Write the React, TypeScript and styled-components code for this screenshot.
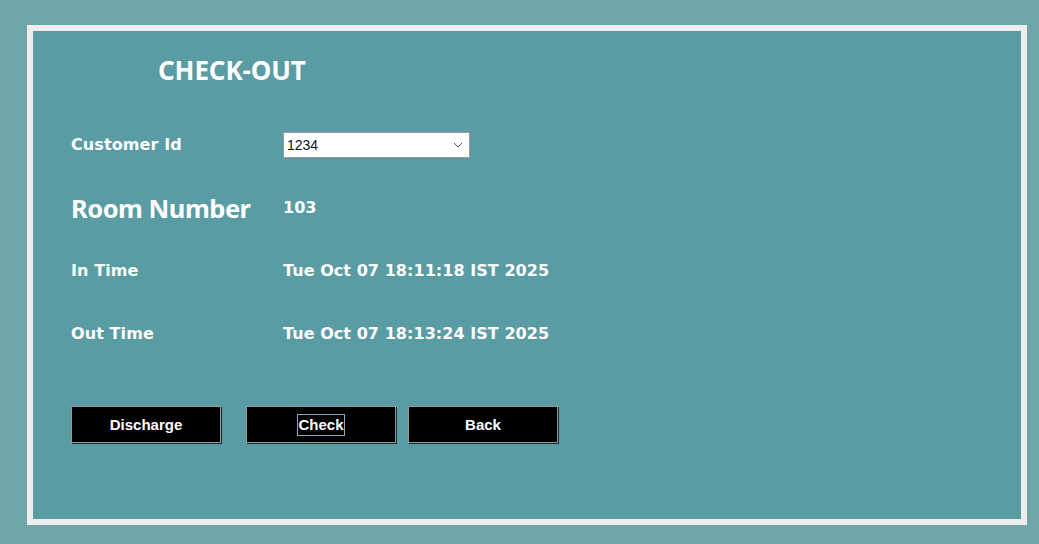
import React from "react";
import styled, { createGlobalStyle } from "styled-components";

const Global = createGlobalStyle`
  html, body { margin: 0; padding: 0; }
  body { background: #6ea5a8; width: 1039px; height: 544px; overflow: hidden; }
`;

const Frame = styled.div`
  box-sizing: border-box;
  margin: 25px 0 0 27px;
  width: 1000px;
  height: 500px;
  border: 6px solid #eeeeee;
  background: #5a9ca4;
  padding: 23px 0 0 38px;
  display: flex;
  flex-direction: column;
`;

const Title = styled.h1`
  margin: 0 0 0 87px;
  font-family: "Noto Sans", "Open Sans", sans-serif;
  font-weight: 700;
  font-size: 26px;
  line-height: 32px;
  color: #ffffff;
  letter-spacing: -0.1px;
`;

const Form = styled.div`
  display: grid;
  grid-template-columns: 212px auto;
  grid-auto-rows: 63px;
  align-items: center;
  margin-top: 27px;
`;

const Label = styled.div<{ $big?: boolean }>`
  font-family: ${(p) => (p.$big ? `"Noto Sans", "Open Sans", sans-serif` : `"DejaVu Sans", Verdana, sans-serif`)};
  font-weight: 700;
  font-size: ${(p) => (p.$big ? "25.5px" : "16px")};
  color: #ffffff;
  letter-spacing: ${(p) => (p.$big ? "-0.5px" : "0.1px")};
`;

const Value = styled.div`
  font-family: "DejaVu Sans", Verdana, sans-serif;
  font-weight: 700;
  font-size: 16px;
  color: #ffffff;
  letter-spacing: 0.05px;
`;

const Select = styled.div`
  box-sizing: border-box;
  width: 187px;
  height: 26px;
  background: #ffffff;
  border: 1px solid #9a9a9a;
  display: flex;
  align-items: center;
  justify-content: space-between;
  padding: 0 6px 0 3px;
  font-family: "Liberation Sans", Arial, sans-serif;
  font-size: 14px;
  color: #111;
`;

const Buttons = styled.div`
  display: flex;
  margin-top: 41px;
`;

const Button = styled.button<{ $gap: number }>`
  box-sizing: border-box;
  width: 150px;
  height: 37px;
  margin-right: ${(p) => p.$gap}px;
  background: #000000;
  border: 1px solid #8d9c9e;
  box-shadow: 1px 1px 0 #1a2a2c;
  color: #ffffff;
  font-family: "Liberation Sans", Arial, sans-serif;
  font-weight: 700;
  font-size: 15px;
  padding: 0;
  display: flex;
  align-items: center;
  justify-content: center;
`;

const Focus = styled.span`
  border: 1px solid #93a8b8;
  padding: 1px 0;
  line-height: 18px;
`;

export default function App() {
  return (
    <>
      <Global />
      <Frame>
        <Title>CHECK-OUT</Title>
        <Form>
          <Label>Customer Id</Label>
          <Select>
            <span>1234</span>
            <svg width="10" height="6" viewBox="0 0 10 6">
              <path d="M1 1 L5 5 L9 1" fill="none" stroke="#555" strokeWidth="1" />
            </svg>
          </Select>
          <Label $big>Room Number</Label>
          <Value>103</Value>
          <Label>In Time</Label>
          <Value>Tue Oct 07 18:11:18 IST 2025</Value>
          <Label>Out Time</Label>
          <Value>Tue Oct 07 18:13:24 IST 2025</Value>
        </Form>
        <Buttons>
          <Button $gap={25}>Discharge</Button>
          <Button $gap={12}>
            <Focus>Check</Focus>
          </Button>
          <Button $gap={0}>Back</Button>
        </Buttons>
      </Frame>
    </>
  );
}
